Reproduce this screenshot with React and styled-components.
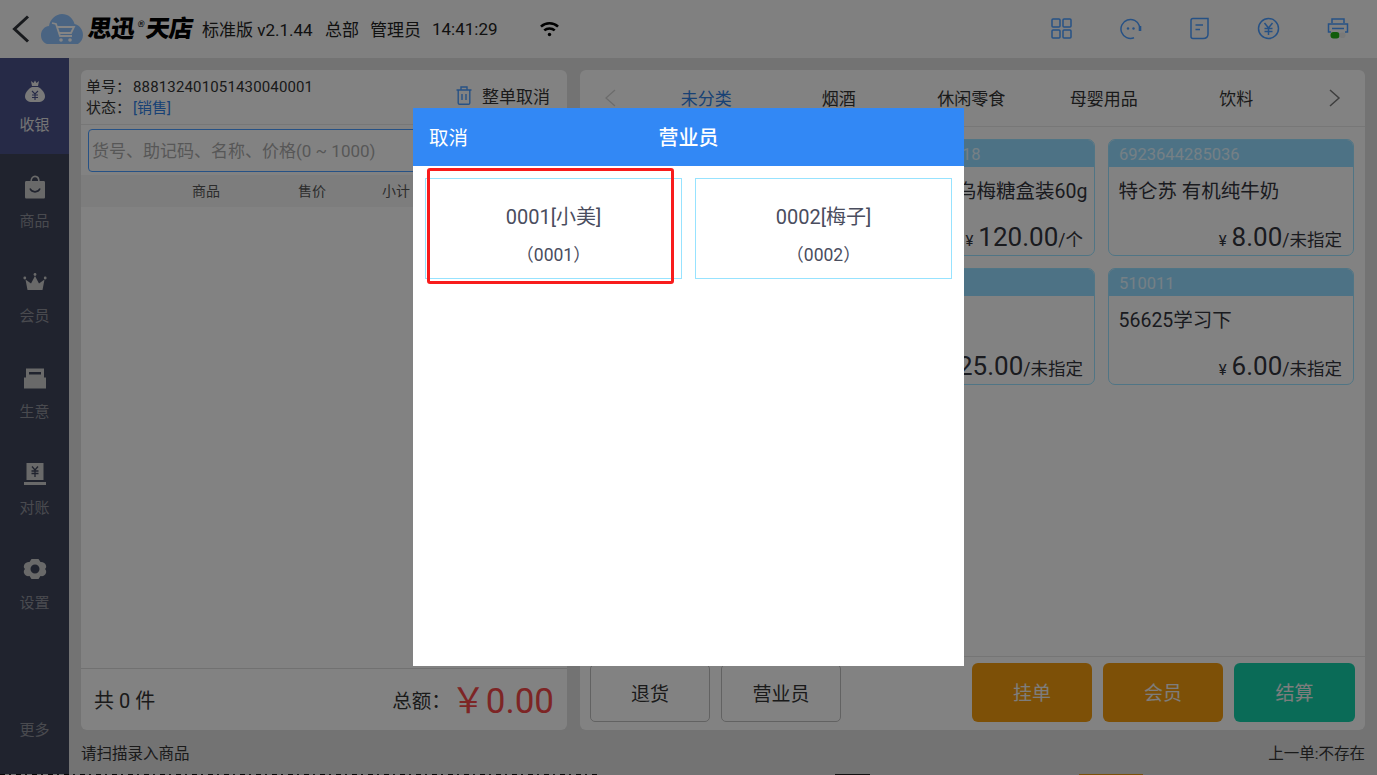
import React from 'react'
import styled, { createGlobalStyle } from 'styled-components'

const GlobalStyle = createGlobalStyle`
  html, body { margin: 0; padding: 0; background: #dcdcdc; }
  * { box-sizing: border-box; }
  body { font-family: Roboto, "Noto Sans CJK SC", sans-serif; color: #33343c; }
`

const BackIcon = () => (
  <svg width="20" height="28" viewBox="0 0 20 28" fill="none" stroke="#2f3238" strokeWidth="3">
    <path d="M17 1.5 L3.5 14 L17 26.5" />
  </svg>
)

const CloudCart = () => (
  <svg width="42" height="30" viewBox="0 0 42 30">
    <path d="M6 30 C1 28 0 24 0 21 C0 16 4 12 8 12 C9 5 15 0 21 0 C27 0 32 4 33.500 10 C38 11 42 15 42 21 C42 25 40 28 37 30 Z" fill="#8ec0fa" />
    <path d="M11 9 L15 10 L19 22 L31 22 M16 13 L33 13 L30 19 L18 19" fill="none" stroke="#fff" strokeWidth="1.800" />
    <circle cx="20" cy="26" r="1.800" fill="#fff" />
    <circle cx="29" cy="26" r="1.800" fill="#fff" />
  </svg>
)

const WifiIcon = () => (
  <svg width="19" height="16" viewBox="0 0 20 16" fill="none" stroke="#000" strokeWidth="2.700">
    <path d="M1 5.500 C6 0.800 14 0.800 19 5.500" />
    <path d="M4.500 9.500 C7.500 6.700 12.500 6.700 15.500 9.500" />
    <circle cx="10" cy="13.800" r="1.800" fill="#000" stroke="none" />
  </svg>
)

const toolIcons = [
  <>
    <rect x="2" y="2" width="8" height="8" rx="1" />
    <rect x="13" y="2" width="8" height="8" rx="1" />
    <rect x="2" y="13" width="8" height="8" rx="1" />
    <rect x="13" y="13" width="8" height="8" rx="1" />
  </>,
  <>
    <path d="M20.500 9 A9.500 9.500 0 1 0 15 20.800" />
    <path d="M21 9 V14" strokeWidth="2.600" />
    <circle cx="9" cy="11.500" r="1.200" fill="#4a9cff" stroke="none" />
    <circle cx="14.500" cy="11.500" r="1.200" fill="#4a9cff" stroke="none" />
  </>,
  <>
    <path d="M5 1.500 H20 V17 C20 20 18 21.500 15 21.500 H5 C3.500 21.500 3 20.500 3 19.500 V3.500 C3 2.500 3.500 1.500 5 1.500 Z" />
    <path d="M7.500 8 H15 M7.500 12.500 H12" />
  </>,
  <>
    <circle cx="11.500" cy="11.500" r="10" />
    <path d="M7.500 6 L11.500 11 L15.500 6 M7.500 11.500 H15.500 M7.500 14.500 H15.500 M11.500 11 V18" />
  </>,
]

const PrinterIcon = () => (
  <svg width="24" height="24" viewBox="0 0 24 24" fill="none" stroke="#4a9cff" strokeWidth="1.500">
    <path d="M6 6 V2 H18 V6" />
    <path d="M5 15 H2.500 V7 H21.500 V15 H19" />
    <path d="M6 11.500 H18" />
    <rect x="4.500" y="15" width="9" height="6.500" rx="3" fill="#22b014" stroke="none" />
    <rect x="13.500" y="15.500" width="6" height="5.500" rx="2.500" fill="#e8e8e8" stroke="none" />
  </svg>
)

const navIcons = {
  cash: (
    <>
      <path d="M8 2 L10.500 4 L12 1.500 L13.500 4 L16 2 L15 7 H9 Z" />
      <path d="M9 8 H15 C19 10 22 14 22 17.500 C22 21 19 23 15 23 H9 C5 23 2 21 2 17.500 C2 14 5 10 9 8 Z" />
      <path d="M9 12 L12 15 L15 12 M9 16 H15 M9 18.500 H15 M12 15 V21" fill="none" stroke="#495188" strokeWidth="1.100" />
    </>
  ),
  goods: (
    <>
      <path d="M8 7 C8 -0.500 16 -0.500 16 7" fill="none" stroke="#c9c9c9" strokeWidth="1.600" />
      <path d="M3.500 6 H20.500 C21.500 6 22 6.500 22 7.500 V22 C22 23 21.500 23.500 20.500 23.500 H3.500 C2.500 23.500 2 23 2 22 V7.500 C2 6.500 2.500 6 3.500 6 Z" />
      <path d="M7 13.500 C9 18 15 18 17 13.500" fill="none" stroke="#3e4459" strokeWidth="1.600" />
    </>
  ),
  member: (
    <>
      <path d="M2.500 9.500 L8 13.500 L12 6 L16 13.500 L21.500 9.500 L19.500 20 H4.500 Z" />
      <circle cx="12" cy="4.500" r="1.400" />
      <circle cx="1.800" cy="8" r="1.400" />
      <circle cx="22.200" cy="8" r="1.400" />
    </>
  ),
  business: (
    <>
      <path d="M3 2.500 H21 V12 H3 Z" />
      <path d="M6 6 H18 V8.500 H6 Z M6 10 H18" fill="#3e4459" />
      <path d="M1 11.500 H23 V22.500 H1 Z" />
    </>
  ),
  ledger: (
    <>
      <path d="M3.500 1 H20.500 V18 H3.500 Z" />
      <path d="M1 20 H23 V23 H1 Z" />
      <path d="M9 4.500 L12 8 L15 4.500 M8.500 9 H15.500 M8.500 11.500 H15.500 M12 8 V15" fill="none" stroke="#3e4459" strokeWidth="1.300" />
    </>
  ),
  settings: (
    <path
      fillRule="evenodd"
      d="M8.500 2 H15.500 L17.500 5 C20 4.800 22.500 6 23 8.500 C23.500 10 23 11 22 12 C23 13 23.500 14.500 23 16 C22.300 18.500 20 19.500 17.500 19 L15.500 22 H8.500 L6.500 19 C4 19.500 1.700 18.500 1 16 C0.500 14.500 1 13 2 12 C1 11 0.500 10 1 8.500 C1.500 6 4 4.800 6.500 5 Z M12 7.500 A4.500 4.500 0 1 0 12 16.500 A4.500 4.500 0 1 0 12 7.500 Z"
    />
  ),
}

const navItems = [
  { key: 'cash', label: '收银', active: true },
  { key: 'goods', label: '商品' },
  { key: 'member', label: '会员' },
  { key: 'business', label: '生意' },
  { key: 'ledger', label: '对账' },
  { key: 'settings', label: '设置' },
]

const tabs = ['未分类', '烟酒', '休闲零食', '母婴用品', '饮料']

// the first column sits behind the dialog, so those cards carry no text
const products = [
  { id: 1 },
  { id: 2, code: '6901028075718', name: '金丝猴怀旧乌梅糖盒装60g', price: '120.00', unit: '个' },
  { id: 3, code: '6923644285036', name: '特仑苏 有机纯牛奶', price: '8.00', unit: '未指定' },
  { id: 4 },
  { id: 5, price: '25.00', unit: '未指定' },
  { id: 6, code: '510011', name: '56625学习下', price: '6.00', unit: '未指定' },
]

const staff = [
  { id: '0001', name: '小美' },
  { id: '0002', name: '梅子' },
]

function App() {
  return (
    <Screen>
      <GlobalStyle />
      <TopBar>
        <BackButton><BackIcon /></BackButton>
        <CloudCart />
        <Brand>思迅<sup>®</sup><span>天店</span></Brand>
        <TopText $width={123}>标准版 v2.1.44</TopText>
        <TopText $width={45}>总部</TopText>
        <TopText $width={62}>管理员</TopText>
        <TopText $width={108}>14:41:29</TopText>
        <WifiIcon />
        <Tools>
          {toolIcons.map((icon, i) => (
            <ToolButton key={i}>
              <svg width="23" height="23" viewBox="0 0 23 23" fill="none" stroke="#4a9cff" strokeWidth="1.500">{icon}</svg>
            </ToolButton>
          ))}
          <ToolButton><PrinterIcon /></ToolButton>
        </Tools>
      </TopBar>

      <Body>
        <Sidebar>
          {navItems.map((item) => (
            <NavItem key={item.key} $active={item.active}>
              <svg width="24" height="24" viewBox="0 0 24 24" fill="#c9c9c9">{navIcons[item.key]}</svg>
              <span>{item.label}</span>
            </NavItem>
          ))}
          <More>更多</More>
        </Sidebar>

        <Work>
          <Panels>
            <OrderPanel>
              <OrderInfo>
                <div>
                  <InfoLine>单号：<span>888132401051430040001</span></InfoLine>
                  <InfoLine>状态：<Status>[销售]</Status></InfoLine>
                </div>
                <CancelAll>
                  <svg width="16" height="19" viewBox="0 0 16 19" fill="none" stroke="#4a9cff" strokeWidth="1.400">
                    <path d="M0.500 4 H15.500 M5 4 V1 H11 V4 M2.200 4 V17 C2.200 17.800 2.700 18.300 3.500 18.300 H12.500 C13.300 18.300 13.800 17.800 13.800 17 V4 M6 8 V14 M10 8 V14" />
                  </svg>
                  整单取消
                </CancelAll>
              </OrderInfo>
              <SearchBox placeholder="货号、助记码、名称、价格(0 ~ 1000)" readOnly />
              <TableHead>
                <span>商品</span>
                <span>售价</span>
                <span>小计</span>
              </TableHead>
              <OrderList />
              <OrderFooter>
                <span>共 0 件</span>
                <Total>总额：<Amount>￥0.00</Amount></Total>
              </OrderFooter>
            </OrderPanel>

            <GoodsPanel>
              <TabRow>
                <Chevron $dim>
                  <svg width="12" height="18" viewBox="0 0 12 18" fill="none" stroke="currentColor" strokeWidth="1.300"><path d="M11 1 L2 9 L11 17" /></svg>
                </Chevron>
                {tabs.map((tab, i) => (
                  <Tab key={tab} $active={i === 0}>{tab}</Tab>
                ))}
                <Chevron $end>
                  <svg width="12" height="18" viewBox="0 0 12 18" fill="none" stroke="currentColor" strokeWidth="1.500"><path d="M1 1 L10 9 L1 17" /></svg>
                </Chevron>
              </TabRow>
              <Grid>
                {products.map((p) => (
                  <Card key={p.id}>
                    <CardCode>{p.code}</CardCode>
                    <CardName>{p.name}</CardName>
                    {p.price && (
                      <CardPrice>
                        <small>¥</small><b>{p.price}</b>/{p.unit}
                      </CardPrice>
                    )}
                  </Card>
                ))}
              </Grid>
              <Actions>
                <OutlineButton>退货</OutlineButton>
                <OutlineButton>营业员</OutlineButton>
                <ActionSpacer />
                <SolidButton $color="#ef9a0f">挂单</SolidButton>
                <SolidButton $color="#ef9a0f">会员</SolidButton>
                <SolidButton $color="#15cea8" $wide>结算</SolidButton>
              </Actions>
            </GoodsPanel>
          </Panels>
          <StatusBar>
            <span>请扫描录入商品</span>
            <span>上一单:不存在</span>
          </StatusBar>
        </Work>
      </Body>
      <BottomEdge />

      <Overlay />
      <Dialog>
        <DialogHead>
          <DialogCancel>取消</DialogCancel>
          <DialogTitle>营业员</DialogTitle>
        </DialogHead>
        <StaffGrid>
          {staff.map((s) => (
            <StaffCard key={s.id}>
              <StaffName>{s.id}[{s.name}]</StaffName>
              <StaffId>（{s.id}）</StaffId>
            </StaffCard>
          ))}
        </StaffGrid>
        <Marker />
      </Dialog>
    </Screen>
  )
}

export default App

const Screen = styled.div`
  position: relative;
  width: 1377px;
  height: 775px;
  overflow: hidden;
  display: flex;
  flex-direction: column;
  background: #dcdcdc;
`

const TopBar = styled.header`
  height: 58px;
  flex: none;
  display: flex;
  align-items: center;
  padding: 0 0 1px 11px;
  background: #f5f5f5;
  font-size: 17px;
  color: #222;
`

const BackButton = styled.div`
  width: 30px;
  display: flex;
  align-items: center;
`

const Brand = styled.div`
  width: 114px;
  margin-left: 5px;
  font-size: 24px;
  line-height: 30px;
  font-weight: 900;
  color: #000;
  white-space: nowrap;
  letter-spacing: -1px;
  transform: skewX(-8deg);
  sup {
    font-size: 9px;
    font-weight: 400;
    vertical-align: 10px;
    line-height: 0;
    margin: 0 3px 0 3px;
  }
`

const TopText = styled.span`
  width: ${(p) => p.$width}px;
  white-space: nowrap;
`

const Tools = styled.div`
  margin-left: auto;
  margin-right: 5px;
  display: flex;
`

const ToolButton = styled.div`
  width: 69px;
  height: 58px;
  display: flex;
  align-items: center;
  justify-content: center;
`

const Body = styled.div`
  flex: 1;
  min-height: 0;
  display: flex;
`

const Sidebar = styled.nav`
  width: 69px;
  flex: none;
  display: flex;
  flex-direction: column;
  background: #3e4459;
`

const NavItem = styled.div`
  height: 95.700px;
  flex: none;
  display: flex;
  flex-direction: column;
  align-items: center;
  padding-top: 21px;
  gap: 12px;
  font-size: 15px;
  line-height: 20px;
  color: ${(p) => (p.$active ? '#e0e0e0' : '#8d8f98')};
  background: ${(p) => (p.$active ? '#495188' : 'transparent')};
  svg {
    fill: ${(p) => (p.$active ? '#e8e8e8' : '#c9c9c9')};
  }
`

const More = styled.div`
  margin-top: auto;
  padding-bottom: 34px;
  text-align: center;
  font-size: 15px;
  line-height: 20px;
  color: #8d8f98;
`

const Work = styled.main`
  flex: 1;
  min-width: 0;
  display: flex;
  flex-direction: column;
`

const Panels = styled.div`
  flex: 1;
  min-height: 0;
  display: flex;
  gap: 13px;
  padding: 12px 12px 0;
`

const Panel = styled.section`
  display: flex;
  flex-direction: column;
  background: #fafafa;
  border-radius: 6px;
  overflow: hidden;
`

const OrderPanel = styled(Panel)`
  width: 486px;
  flex: none;
`

const OrderInfo = styled.div`
  height: 55px;
  flex: none;
  display: flex;
  align-items: center;
  justify-content: space-between;
  padding: 2px 17px 0 5px;
  border-bottom: 1px solid #e4e4e4;
`

const InfoLine = styled.div`
  font-size: 15px;
  line-height: 21px;
  color: #333;
  span {
    margin-left: 2px;
    letter-spacing: 0.150px;
  }
`

const Status = styled.b`
  margin-left: 2px;
  font-weight: 400;
  color: #2e7de0;
`

const CancelAll = styled.div`
  display: flex;
  align-items: center;
  gap: 10px;
  margin-bottom: 5px;
  font-size: 17px;
  color: #333;
`

const SearchBox = styled.input`
  flex: none;
  height: 43px;
  margin: 4px 12px 3px 7px;
  padding: 0 3px;
  border: 1px solid #4a9cff;
  border-radius: 4px;
  background: #fafafa;
  font: 17px Roboto, "Noto Sans CJK SC", sans-serif;
  outline: none;
  &::placeholder {
    color: #a8a8a8;
    opacity: 1;
  }
`

const TableHead = styled.div`
  height: 32px;
  flex: none;
  display: grid;
  grid-template-columns: 100px 112px 56px;
  align-items: center;
  justify-items: center;
  padding: 0 0 2px 75px;
  background: #f0f0f0;
  font-size: 14px;
  color: #555;
`

const OrderList = styled.div`
  flex: 1;
`

const OrderFooter = styled.div`
  height: 62px;
  flex: none;
  display: flex;
  align-items: center;
  justify-content: space-between;
  padding: 0 13px 0 13px;
  border-top: 1px solid #d8d8d8;
  font-size: 20px;
  color: #333;
`

const Total = styled.div`
  display: flex;
  align-items: center;
  font-size: 19.500px;
`

const Amount = styled.span`
  margin: -4px 0 0 0;
  font-size: 35px;
  color: #f04848;
`

const GoodsPanel = styled(Panel)`
  flex: 1;
  min-width: 0;
`

const TabRow = styled.div`
  height: 57px;
  flex: none;
  display: flex;
  align-items: center;
  padding-bottom: 1px;
  border-bottom: 1px solid #e4e4e4;
`

const Chevron = styled.div`
  width: 60px;
  flex: none;
  display: flex;
  justify-content: center;
  padding-left: ${(p) => (p.$end ? '4px' : '0')};
  padding-right: ${(p) => (p.$dim ? '1px' : '0')};
  color: ${(p) => (p.$dim ? '#cfcfcf' : '#777')};
`

const Tab = styled.div`
  width: 132.500px;
  flex: none;
  text-align: center;
  font-size: 17px;
  color: ${(p) => (p.$active ? '#2e7de0' : '#333')};
`

const Grid = styled.div`
  flex: 1;
  min-height: 0;
  display: grid;
  grid-template-columns: repeat(3, 246px);
  grid-auto-rows: 117px;
  gap: 12px 13px;
  padding: 12px 10px 0;
  align-content: start;
`

const Card = styled.article`
  display: flex;
  flex-direction: column;
  border: 1px solid #9ae0ff;
  border-radius: 7px;
  overflow: hidden;
`

const CardCode = styled.div`
  height: 27px;
  flex: none;
  padding: 1px 10px 0;
  line-height: 27px;
  background: #94dbff;
  font-size: 16.500px;
  color: #e0f5ff;
`

const CardName = styled.div`
  padding: 12px 9.500px 0;
  line-height: 26px;
  min-height: 38px;
  font-size: 19.500px;
  white-space: nowrap;
  color: #33343c;
`

const CardPrice = styled.div`
  margin-top: auto;
  padding-right: 11px;
  text-align: right;
  line-height: 27px;
  font-size: 17.500px;
  white-space: nowrap;
  color: #33343c;
  small {
    font-size: 15px;
    margin-right: 5px;
  }
  b {
    font-weight: 400;
    font-size: 26px;
  }
`

const Actions = styled.div`
  height: 74px;
  flex: none;
  display: flex;
  align-items: flex-end;
  gap: 11px;
  padding: 0 10px 8px;
  border-top: 1px solid #e0e0e0;
`

const ActionSpacer = styled.div`
  flex: 1;
`

const OutlineButton = styled.div`
  width: 120px;
  height: 58px;
  display: flex;
  align-items: center;
  justify-content: center;
  padding-bottom: 2px;
  border: 1px solid #bcbcbc;
  border-radius: 5px;
  font-size: 19px;
  color: #333;
`

const SolidButton = styled.div`
  width: ${(p) => (p.$wide ? '121px' : '120px')};
  height: 59px;
  display: flex;
  align-items: center;
  justify-content: center;
  padding-bottom: 2px;
  border-radius: 6px;
  background: ${(p) => p.$color};
  font-size: 19px;
  color: #f0f0f0;
`

const StatusBar = styled.footer`
  height: 44px;
  flex: none;
  display: flex;
  align-items: center;
  justify-content: space-between;
  padding: 0 12px;
  font-size: 15.500px;
  color: #333;
`

const BottomEdge = styled.div`
  height: 1px;
  flex: none;
  background:
    linear-gradient(90deg, transparent 835px, #222 835px, #222 870px, transparent 870px, transparent 1079px, #e89a10 1079px, #e89a10 1143px, transparent 1143px),
    repeating-linear-gradient(90deg, #111 0 5px, transparent 5px 9px, #222 9px 11px, transparent 11px 16px);
  background-size: 100% 100%, 600px 100%;
  background-repeat: no-repeat;
`

const Overlay = styled.div`
  position: absolute;
  inset: 0;
  background: rgba(0, 0, 0, 0.48);
`

const Dialog = styled.div`
  position: absolute;
  left: 413px;
  top: 108px;
  width: 551px;
  height: 558px;
  display: flex;
  flex-direction: column;
  background: #fff;
`

const DialogHead = styled.div`
  position: relative;
  height: 58px;
  flex: none;
  display: flex;
  align-items: center;
  justify-content: center;
  padding-bottom: 2px;
  background: #3288f5;
  font-size: 20px;
  color: #fff;
`

const DialogCancel = styled.span`
  position: absolute;
  left: 16px;
  font-size: 19.500px;
`

const DialogTitle = styled.span`
  font-weight: 500;
`

const StaffGrid = styled.div`
  display: grid;
  grid-template-columns: repeat(2, 257px);
  gap: 13px;
  padding: 12px 12px 0;
`

const StaffCard = styled.div`
  height: 101px;
  display: flex;
  flex-direction: column;
  align-items: center;
  padding-top: 25px;
  border: 1px solid #97e3ff;
  color: #4a4d5e;
`

const StaffName = styled.div`
  font-size: 20px;
  line-height: 26px;
`

const StaffId = styled.div`
  margin-top: 14px;
  font-size: 17.500px;
  line-height: 22px;
`

const Marker = styled.div`
  position: absolute;
  left: 14px;
  top: 60px;
  width: 247px;
  height: 116px;
  border: 3px solid #f81c1c;
  border-radius: 3px;
`
